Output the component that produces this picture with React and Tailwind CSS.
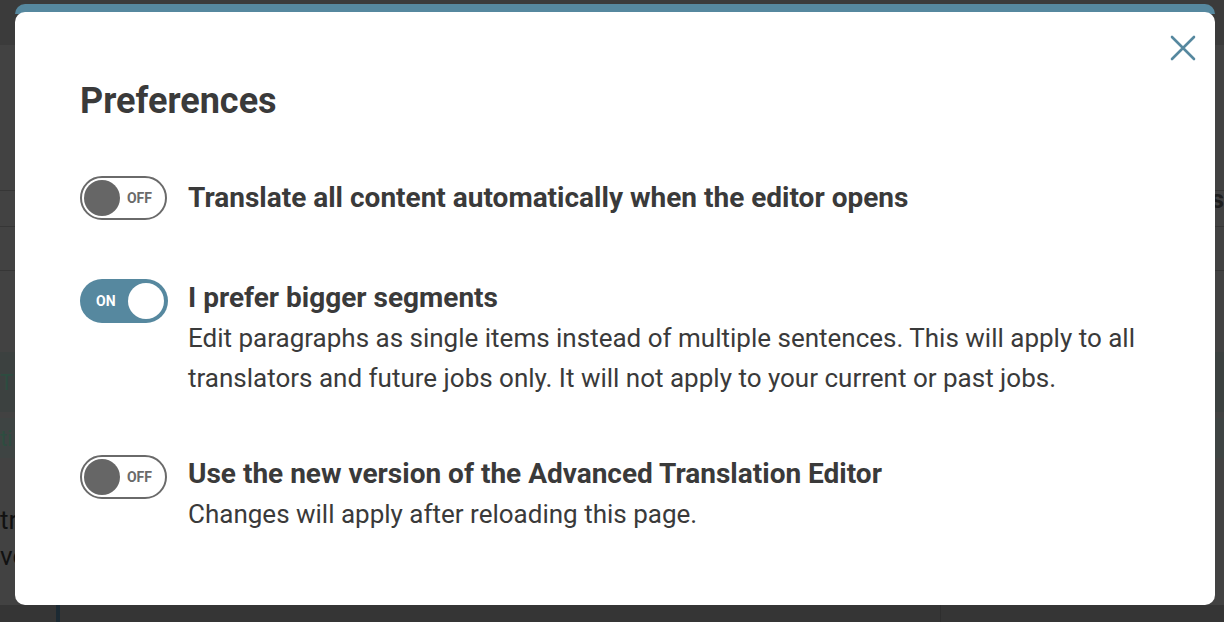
import React from "react";

function Toggle({ on }) {
  if (on) {
    return (
      <div className="flex h-[44px] w-[88px] shrink-0 items-center justify-between rounded-full bg-[#56889f] pl-[16px] pr-[4px]">
        <span className="text-[14px] font-bold text-white">ON</span>
        <span className="h-[36px] w-[36px] rounded-full bg-white" />
      </div>
    );
  }
  return (
    <div className="flex h-[44px] w-[87px] shrink-0 items-center justify-between rounded-full border-2 border-[#6a6a6a] bg-white pl-[2px] pr-[13px]">
      <span className="h-[36px] w-[36px] rounded-full bg-[#666666]" />
      <span className="text-[14px] font-bold text-[#6a6a6a]">OFF</span>
    </div>
  );
}

export default function App() {
  return (
    <div
      className="relative h-[622px] w-[1224px] overflow-hidden bg-[#424242]"
      style={{ fontFamily: "Roboto, 'Noto Sans', sans-serif" }}
    >
      {/* dimmed page behind */}
      <div className="flex h-full w-full flex-col">
        <div className="h-[45px] bg-[#3b3b3b]" />
        <div className="h-[145px]" />
        <div className="h-[36px] border-t border-[#363636]" />
        <div className="h-[44px] border-t border-[#363636]" />
        <div className="h-[82px] border-t border-[#363636]" />
        <div className="flex h-[60px] items-center bg-[#3c4140] text-[22px] text-[#2d4d40]">
          <span>Ti</span>
        </div>
        <div className="h-[6px]" />
        <div className="flex h-[40px] items-center bg-[#3e4443] text-[22px] text-[#2d4d40]">
          <span>ti</span>
        </div>
        <div className="h-[44px]" />
        <div className="text-[26px] leading-[36px] text-[#111]">
          <div>tr</div>
          <div>vo</div>
        </div>
        <div className="mt-auto flex h-[17px] bg-[#353535]">
          <div className="ml-[56px] w-[4px] bg-[#1c2a33]" />
          <div className="ml-[880px] w-[1px] bg-[#2e2e2e]" />
        </div>
      </div>
      <div className="absolute right-[0px] top-[180px] text-[26px] font-bold text-[#1e1e1e]">s</div>

      {/* modal */}
      <div className="absolute left-[15px] top-[4px] flex w-[1200px] flex-col">
        <div className="h-[10px] rounded-t-[10px] bg-[#56889f]" />
        <div className="relative -mt-[2px] h-[593px] rounded-[10px] bg-white pl-[65px] pr-[20px] pt-[69px] text-[#3a3a3a]">
          <svg width="26" height="26" viewBox="0 0 26 26" className="absolute right-[19px] top-[23px]">
            <path d="M2 2 L24 24 M24 2 L2 24" stroke="#56889f" strokeWidth="2.6" strokeLinecap="round" />
          </svg>
          <h1 className="text-[36px] font-bold leading-[40px]">Preferences</h1>

          <div className="mt-[55px] flex items-start gap-[21px]">
            <Toggle on={false} />
            <div className="mt-[2px] text-[28px] font-bold leading-[40px]">
              Translate all content automatically when the editor opens
            </div>
          </div>

          <div className="mt-[59px] flex items-start gap-[20px]">
            <Toggle on />
            <div className="-mt-[1px]">
              <div className="text-[28px] font-bold leading-[40px]">I prefer bigger segments</div>
              <div className="text-[26px] leading-[40px]">
                Edit paragraphs as single items instead of multiple sentences. This will apply to all
                <br />
                translators and future jobs only. It will not apply to your current or past jobs.
              </div>
            </div>
          </div>

          <div className="mt-[57px] flex items-start gap-[21px]">
            <Toggle on={false} />
            <div className="-mt-[1px]">
              <div className="text-[28px] font-bold leading-[40px]">
                Use the new version of the Advanced Translation Editor
              </div>
              <div className="text-[26px] leading-[40px]">Changes will apply after reloading this page.</div>
            </div>
          </div>
        </div>
      </div>
    </div>
  );
}
